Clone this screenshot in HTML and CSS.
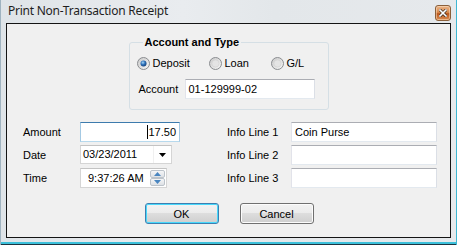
FILE: index.html
```html
<!DOCTYPE html>
<html>
<head>
<meta charset="utf-8">
<link rel="stylesheet" href="styles.css">
</head>
<body>
<div class="window">
  <div class="titlebar">
    <span class="title">Print Non-Transaction Receipt</span>
    <span class="close">
      <svg width="8" height="8" viewBox="0 0 8 8"><path d="M1 1 L7 7 M7 1 L1 7" stroke="#3a2a1e" stroke-width="3" stroke-linecap="square"/><path d="M1 1 L7 7 M7 1 L1 7" stroke="#ffffff" stroke-width="1.6" stroke-linecap="square"/></svg>
    </span>
  </div>
  <div class="client">
    <fieldset class="group">
      <legend class="legend">Account and Type</legend>
      <div class="radios">
        <div class="radio-item w72">
          <svg class="radio" width="13" height="13" viewBox="0 0 13 13">
            <defs>
              <linearGradient id="rg1" x1="0" y1="0" x2="1" y2="1"><stop offset="0" stop-color="#c9c9c9"/><stop offset="1" stop-color="#f7f7f7"/></linearGradient>
              <radialGradient id="dot" cx="0.4" cy="0.35" r="0.7"><stop offset="0" stop-color="#a8d8f8"/><stop offset="0.5" stop-color="#2b6fb8"/><stop offset="1" stop-color="#173f74"/></radialGradient>
            </defs>
            <circle cx="6.5" cy="6.5" r="6" fill="url(#rg1)" stroke="#8a8d90" stroke-width="1"/>
            <circle cx="6.5" cy="6.5" r="3" fill="url(#dot)"/>
          </svg>
          <span>Deposit</span>
        </div>
        <div class="radio-item w62">
          <svg class="radio" width="13" height="13" viewBox="0 0 13 13">
            <defs>
              <linearGradient id="rg2" x1="0" y1="0" x2="1" y2="1"><stop offset="0" stop-color="#c9c9c9"/><stop offset="1" stop-color="#f7f7f7"/></linearGradient>
            </defs>
            <circle cx="6.5" cy="6.5" r="6" fill="url(#rg2)" stroke="#8a8d90" stroke-width="1"/>
            <circle cx="6.5" cy="6.5" r="3.6" fill="#e4e4e4" stroke="#d0d0d0" stroke-width="0.6"/>
          </svg>
          <span>Loan</span>
        </div>
        <div class="radio-item">
          <svg class="radio" width="13" height="13" viewBox="0 0 13 13">
            <defs>
              <linearGradient id="rg3" x1="0" y1="0" x2="1" y2="1"><stop offset="0" stop-color="#c9c9c9"/><stop offset="1" stop-color="#f7f7f7"/></linearGradient>
            </defs>
            <circle cx="6.5" cy="6.5" r="6" fill="url(#rg3)" stroke="#8a8d90" stroke-width="1"/>
            <circle cx="6.5" cy="6.5" r="3.6" fill="#e4e4e4" stroke="#d0d0d0" stroke-width="0.6"/>
          </svg>
          <span>G/L</span>
        </div>
      </div>
      <div class="account-row">
        <span class="label account-label">Account</span>
        <div class="textbox account-box">01-129999-02</div>
      </div>
    </fieldset>

    <div class="fields">
      <span class="label">Amount</span>
      <div class="textbox focused amount-box"><span class="caret"></span>17.50</div>
      <span></span>
      <span class="label">Info Line 1</span>
      <div class="textbox info-box">Coin Purse</div>

      <span class="label">Date</span>
      <div class="textbox date-box">
        <span class="date-text">03/23/2011</span>
        <span class="drop"><svg width="7" height="4" viewBox="0 0 7 4"><path d="M0 0 H7 L3.5 4 Z" fill="#000"/></svg></span>
      </div>
      <span></span>
      <span class="label">Info Line 2</span>
      <div class="textbox info-box"></div>

      <span class="label">Time</span>
      <div class="textbox time-box">
        <span class="time-text">9:37:26 AM</span>
        <span class="spin">
          <span class="spin-btn"><svg width="7" height="4" viewBox="0 0 7 4"><path d="M0 4 H7 L3.5 0 Z" fill="#4a86c0"/></svg></span>
          <span class="spin-btn"><svg width="7" height="4" viewBox="0 0 7 4"><path d="M0 0 H7 L3.5 4 Z" fill="#4a86c0"/></svg></span>
        </span>
      </div>
      <span></span>
      <span class="label">Info Line 3</span>
      <div class="textbox info-box"></div>
    </div>

    <div class="buttons">
      <button class="btn default">OK</button>
      <button class="btn">Cancel</button>
    </div>
  </div>
</div>
</body>
</html>
```

FILE: styles.css
```css
html, body {
  margin: 0;
  padding: 0;
}
body {
  width: 457px;
  height: 245px;
  overflow: hidden;
}
.window {
  box-sizing: border-box;
  width: 457px;
  height: 245px;
  display: flex;
  flex-direction: column;
  padding: 0 6px 7px 6px;
  background: linear-gradient(90deg, #dfe4e8 0%, #e9ecef 40%, #e3e7ea 60%, #e6e9ec 100%);
  box-shadow: inset 1px 0 0 #9fb3c0, inset -1px 0 0 #3fb7d3, inset 0 -1px 0 #1d3440, inset 0 -3px 0 #3cc0da;
}
.titlebar {
  height: 23px;
  flex: none;
  display: flex;
  align-items: flex-start;
  justify-content: space-between;
}
.title {
  font-family: "Noto Sans", "Open Sans", sans-serif;
  font-size: 12px;
  letter-spacing: -0.25px;
  color: #1e1e1e;
  margin: 3px 0 0 2px;
  line-height: 16px;
}
.close {
  box-sizing: border-box;
  width: 16px;
  height: 16px;
  margin-top: 5px;
  border: 1px solid #8a5f3a;
  border-radius: 3px;
  background: linear-gradient(#eab58a 0%, #d88a4e 45%, #b9561c 55%, #d98c52 100%);
  display: flex;
  align-items: center;
  justify-content: center;
  box-shadow: inset 0 0 0 1px rgba(255, 230, 200, 0.5);
}
.client {
  flex: 1;
  border: 1px solid #141414;
  background: #f0f0f0;
  display: flex;
  flex-direction: column;
  font-family: "Liberation Sans", Arial, sans-serif;
  font-size: 11px;
  color: #000;
}
.group {
  box-sizing: border-box;
  width: 200px;
  height: 74px;
  margin: 12px auto 0 auto;
  padding: 8px 7px 0 7px;
  border: 1px solid #d5dfe5;
  border-radius: 3px;
  min-width: 0;
}
.legend {
  font-weight: bold;
  font-size: 11px;
  line-height: 13px;
  padding: 0 2px;
  margin-left: 6px;
}
.radios {
  display: flex;
  height: 13px;
  align-items: center;
}
.radio-item {
  display: flex;
  align-items: center;
  gap: 3px;
  line-height: 13px;
}
.w72 { width: 72px; }
.w62 { width: 62px; }
.radio { flex: none; display: block; }
.account-row {
  display: flex;
  align-items: center;
  margin-top: 9px;
}
.account-label {
  width: 48px;
  padding-left: 2px;
  box-sizing: border-box;
}
.label {
  line-height: 13px;
  align-self: center;
}
.textbox {
  box-sizing: border-box;
  height: 20px;
  background: #fff;
  border: 1px solid #abadb3;
  border-top-color: #abadb3;
  border-left-color: #e2e3ea;
  border-right-color: #dbdfe6;
  border-bottom-color: #e3e9ef;
  padding: 0 3px;
  display: flex;
  align-items: center;
  line-height: 13px;
  white-space: nowrap;
}
.account-box { width: 130px; }
.fields {
  margin-top: 12px;
  padding-left: 16px;
  display: grid;
  grid-template-columns: 57px 100px 47px 64px 146px;
  grid-template-rows: 20px 20px 20px;
  row-gap: 3px;
}
.amount-box {
  width: 100px;
  justify-content: flex-end;
  border-color: #569de5;
  border-top-color: #3d7bad;
  border-left-color: #a4c9e3;
  border-right-color: #a4c9e3;
  border-bottom-color: #b7d9ed;
}
.caret {
  width: 1px;
  height: 14px;
  background: #000;
  margin-right: 0;
}
.info-box { width: 146px; }
.date-box {
  width: 92px;
  height: 19px;
  padding: 0 0 0 2px;
  justify-content: space-between;
  border-color: #d5d5d5;
  border-top-color: #c3c3c3;
}
.drop {
  width: 18px;
  height: 17px;
  display: flex;
  align-items: center;
  justify-content: center;
  border-left: 1px solid #f0f0f0;
  padding-top: 1px;
  box-sizing: border-box;
}
.time-box {
  width: 87px;
  padding: 0 1px 0 7px;
  justify-content: space-between;
  border-color: #d5d5d5;
  border-top-color: #c3c3c3;
}
.spin {
  display: flex;
  flex-direction: column;
  width: 15px;
  height: 16px;
}
.spin-btn {
  flex: 1;
  box-sizing: border-box;
  border: 1px solid #bcc3ca;
  border-radius: 2px;
  background: linear-gradient(#f5f6f7, #dde1e5);
  display: flex;
  align-items: center;
  justify-content: center;
}
.buttons {
  margin-top: 15px;
  display: flex;
  justify-content: center;
  gap: 21px;
  padding-left: 1px;
}
.btn {
  box-sizing: border-box;
  width: 74px;
  height: 21px;
  font-family: "Liberation Sans", Arial, sans-serif;
  font-size: 11px;
  color: #000;
  border: 1px solid #707070;
  border-radius: 3px;
  background: linear-gradient(#f2f2f2 0%, #ebebeb 50%, #dddddd 50%, #cfcfcf 100%);
  box-shadow: inset 0 0 0 1px #fcfcfc;
  padding: 0;
}
.btn.default {
  border-color: #3c7fb1;
  box-shadow: inset 0 0 0 1px #48d8fb;
}
```
